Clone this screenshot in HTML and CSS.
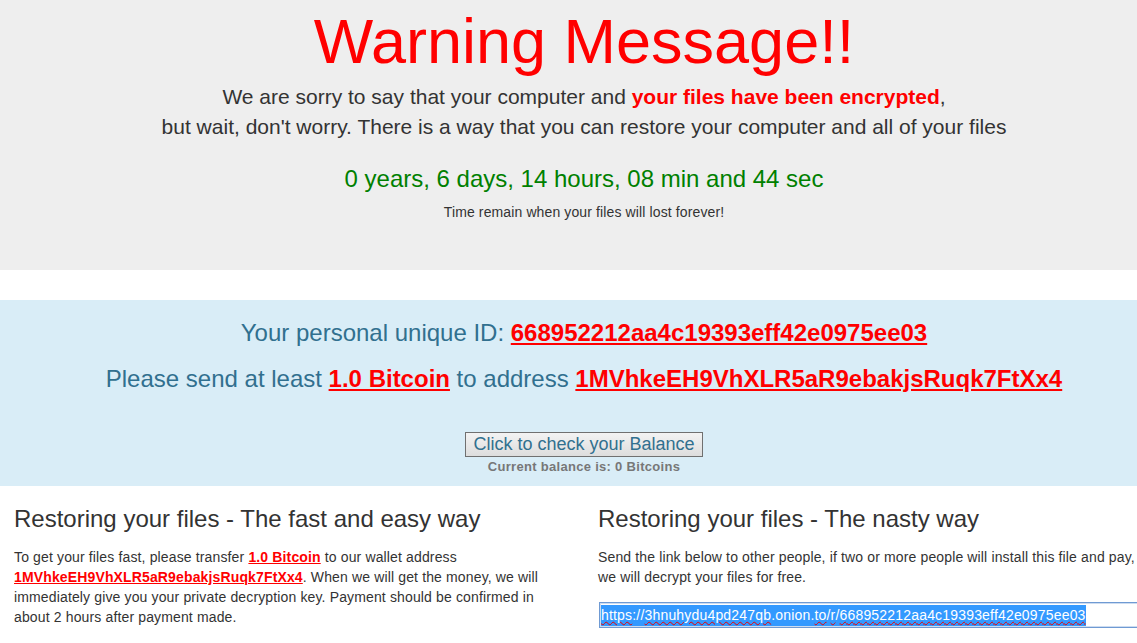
FILE: index.html
```html
<!DOCTYPE html>
<html lang="en">
<head>
<meta charset="utf-8">
<title>Warning Message</title>
<link rel="stylesheet" href="styles.css">
</head>
<body>
<div class="page">
  <section class="hero">
    <h1 class="hero-title">Warning Message!!</h1>
    <p class="hero-lead">We are sorry to say that your computer and <strong class="alert-red">your files have been encrypted</strong>,<br>but wait, don't worry. There is a way that you can restore your computer and all of your files</p>
    <h3 class="countdown">0 years, 6 days, 14 hours, 08 min and 44 sec</h3>
    <p class="countdown-note">Time remain when your files will lost forever!</p>
  </section>

  <section class="info">
    <h3 class="info-line">Your personal unique ID: <a class="red-link" href="#">668952212aa4c19393eff42e0975ee03</a></h3>
    <h3 class="info-line info-line-2">Please send at least <a class="red-link" href="#">1.0 Bitcoin</a> to address <a class="red-link" href="#">1MVhkeEH9VhXLR5aR9ebakjsRuqk7FtXx4</a></h3>
    <div class="balance">
      <button class="balance-btn" type="button">Click to check your Balance</button>
      <div class="balance-note">Current balance is: 0 Bitcoins</div>
    </div>
  </section>

  <section class="columns">
    <div class="col">
      <h3 class="col-title">Restoring your files - The fast and easy way</h3>
      <p class="col-text">To get your files fast, please transfer <a class="red-link" href="#">1.0 Bitcoin</a> to our wallet address <a class="red-link" href="#">1MVhkeEH9VhXLR5aR9ebakjsRuqk7FtXx4</a>. When we will get the money, we will immediately give you your private decryption key. Payment should be confirmed in about 2 hours after payment made.</p>
    </div>
    <div class="col">
      <h3 class="col-title">Restoring your files - The nasty way</h3>
      <p class="col-text">Send the link below to other people, if two or more people will install this file and pay, we will decrypt your files for free.</p>
      <div class="link-box"><span class="sel"><span class="spell">https</span>://<span class="spell">3hnuhydu4pd247qb</span>.onion.<span class="spell">to</span>/<span class="spell">r</span>/<span class="spell">668952212aa4c19393eff42e0975ee03</span></span></div>
    </div>
  </section>
</div>
</body>
</html>
```

FILE: styles.css
```css
html, body {
  margin: 0;
  padding: 0;
  overflow: hidden;
  background: #fff;
}

.page {
  width: 1168px;
  font-family: "Liberation Sans", Arial, Helvetica, sans-serif;
  font-size: 14px;
  line-height: 20px;
  color: #333;
}

.hero {
  background: #eee;
  text-align: center;
  padding: 7px 0 48px;
}

.hero-title {
  margin: 0 0 6px;
  font-size: 63px;
  line-height: 69px;
  font-weight: 400;
  color: #f00;
}

.hero-lead {
  margin: 0;
  font-size: 21px;
  line-height: 30px;
  font-weight: 200;
}

.alert-red {
  color: #f00;
  font-weight: 700;
}

.countdown {
  margin: 24px 0 0;
  font-size: 24px;
  line-height: 26px;
  font-weight: 400;
  color: #008000;
}

.countdown-note {
  margin: 10px 0 0;
  font-size: 14px;
  line-height: 20px;
  letter-spacing: 0.12px;
}

.info {
  margin-top: 30px;
  background: #d9edf7;
  color: #31708f;
  text-align: center;
  padding: 20px 0 11px;
}

.info-line {
  margin: 0;
  font-size: 24px;
  line-height: 26px;
  font-weight: 400;
}

.info-line-2 {
  margin-top: 20px;
}

.red-link {
  color: #f00;
  font-weight: 700;
  text-decoration: underline;
}

.balance {
  margin-top: 40px;
  display: flex;
  flex-direction: column;
  align-items: center;
}

.balance-btn {
  font-family: "Liberation Sans", Arial, sans-serif;
  font-size: 18px;
  line-height: 21px;
  height: 25px;
  padding: 1px 7px;
  color: #31708f;
  background: linear-gradient(#f3f3f3, #dddddd);
  border: 1px solid #707070;
  border-radius: 0;
}

.balance-note {
  margin-top: 1px;
  font-size: 13px;
  line-height: 17px;
  letter-spacing: 0.3px;
  font-weight: 700;
  color: #777;
}

.columns {
  display: grid;
  grid-template-columns: minmax(0, 1fr) minmax(0, 1fr);
}

.col {
  padding: 0 15px 0 15px;
  min-width: 0;
}

.col-title {
  margin: 20px 0 0 -1px;
  font-size: 24px;
  line-height: 26px;
  font-weight: 400;
}

.col-text {
  margin: 15px 0 0 -1px;
  letter-spacing: 0.14px;
}

.link-box {
  margin-top: 15px;
  height: 26px;
  width: 100%;
  border: 1px solid #6f9ad3;
  box-shadow: inset 0 0 0 1px #cddcf0;
  background: #fff;
  line-height: 24px;
  font-size: 14px;
  letter-spacing: 0.18px;
  padding-left: 1px;
  white-space: nowrap;
  box-sizing: border-box;
}

.sel {
  background: #3399ff;
  color: #fff;
  padding: 2px 0 3px;
}

.spell {
  text-decoration: underline wavy #e00;
  text-decoration-thickness: 1px;
  text-underline-offset: 1px;
}
```
